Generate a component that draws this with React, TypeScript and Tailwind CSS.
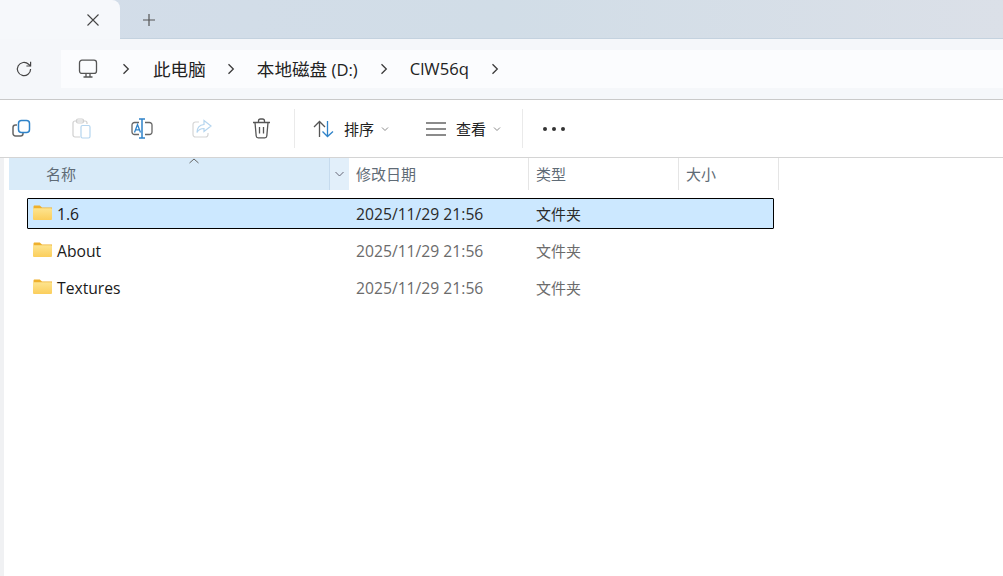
import React from "react";

const fontStack = "font-['Open_Sans','Noto_Sans_CJK_SC',sans-serif]";

const Chevron = ({ className = "" }: { className?: string }) => (
  <svg width="8" height="12" viewBox="0 0 8 12" fill="none" stroke="#3a3a3a" strokeWidth="1.3" className={className}>
    <path d="M1.5 1.2 6.3 6l-4.8 4.8" />
  </svg>
);

const SmallDown = () => (
  <svg width="8" height="6" viewBox="0 0 8 6" fill="none" stroke="#8a8a8a" strokeWidth="1">
    <path d="M1 1.5 4 4.5 7 1.5" />
  </svg>
);

const Folder = () => (
  <svg width="19" height="15" viewBox="0 0 19 15" className="shrink-0">
    <defs>
      <linearGradient id="folderBody" x1="0" y1="0" x2="0" y2="1">
        <stop offset="0" stopColor="#fde48f" />
        <stop offset="1" stopColor="#fbce5c" />
      </linearGradient>
    </defs>
    <path d="M0.500 1.700C0.500 1 1 0.500 1.700 0.500h4.600c.4 0 .7.1 1 .4L9 2.500h10V5H0.500z" fill="#efb02c" />
    <rect x="0" y="3.200" width="19" height="11.800" rx="1" fill="url(#folderBody)" />
  </svg>
);

const Row = ({ name, selected }: { name: string; selected?: boolean }) => (
  <div
    className={`ml-[27px] flex h-[31px] w-[747px] items-center rounded-[1px] border pt-[1px] text-[15.7px] ${
      selected ? "border-black bg-[#cce8ff]" : "border-transparent"
    }`}
  >
    <div className="flex w-[328px] items-center gap-[5px] pl-[5px] text-[#1a1a1a]">
      <div className="-mt-[3px]">
        <Folder />
      </div>
      <span className="pt-[1px]">{name}</span>
    </div>
    <div className={`w-[180px] pt-[1px] ${selected ? "text-[#2a2a2a]" : "text-[#6b6b6b]"}`}>2025/11/29 21:56</div>
    <div className={`text-[15px] ${selected ? "text-[#2a2a2a]" : "text-[#6b6b6b]"}`}>文件夹</div>
  </div>
);

const HeaderCell = ({ label, className }: { label: string; className: string }) => (
  <div className={`flex h-full items-center border-r border-[#e5e5e5] pl-[7px] text-[15px] text-[#5f6b76] ${className}`}>
    {label}
  </div>
);

export default function App() {
  return (
    <div className={`flex h-[576px] w-[1003px] flex-col overflow-hidden bg-white ${fontStack}`}>
      {/* Tab strip */}
      <div className="flex h-[39px] shrink-0 border-b border-[#c4d2df] bg-gradient-to-r from-[#d3dde9] via-[#d1dde7] to-[#dbe0e8]">
        <div className="-mb-px flex w-[120px] items-center justify-end rounded-tr-[8px] bg-[#f6f8fb] pr-[20px]">
          <svg width="14" height="14" viewBox="0 0 14 14" stroke="#444" strokeWidth="1.1">
            <path d="M1.5 1.5l11 11M12.5 1.5l-11 11" />
          </svg>
        </div>
        <div className="ml-[22px] flex items-center pt-[1px]">
          <svg width="14" height="14" viewBox="0 0 14 14" stroke="#555" strokeWidth="1.2">
            <path d="M7 1v12M1 7h12" />
          </svg>
        </div>
      </div>

      {/* Address bar */}
      <div className="flex h-[61px] shrink-0 items-center border-b border-[#c9c9c9] bg-[#f5f7fa]">
        <div className="flex w-[61px] justify-center pr-[14px]">
          <svg width="18" height="18" viewBox="0 0 18 18" fill="none" stroke="#444" strokeWidth="1.2">
            <path d="M15.600 9a6.600 6.600 0 1 1-2-4.700L15.500 6" />
            <path d="M15.600 1.800V6h-4.200" />
          </svg>
        </div>
        <div className="flex h-[38px] w-[942px] items-center bg-[#fbfcfe] text-[17.6px] text-[#222]">
          <svg width="20" height="20" viewBox="0 0 20 20" fill="none" stroke="#555" strokeWidth="1.3" className="ml-[17px]">
            <rect x="1.500" y="1.200" width="17" height="13.200" rx="2.500" />
            <path d="M8 14.500v3M12 14.500v3M5.500 18h9" />
          </svg>
          <Chevron className="ml-[24px]" />
          <span className="ml-[23px]">此电脑</span>
          <Chevron className="ml-[21px]" />
          <span className="ml-[22px]">
            本地磁盘<span className="text-[16.6px]"> (D:)</span>
          </span>
          <Chevron className="ml-[22px]" />
          <span className="ml-[22px] text-[16.6px]">ClW56q</span>
          <Chevron className="ml-[22px]" />
        </div>
      </div>

      {/* Command bar */}
      <div className="flex h-[58px] shrink-0 items-center border-b border-[#d4d4d4] bg-white pl-[12px]">
        <svg width="19" height="19" viewBox="0 0 19 19" fill="none" strokeWidth="1.5">
          <path d="M5 6H3.500A2.500 2.500 0 0 0 1 8.500v6A2.500 2.500 0 0 0 3.500 17h5A2.500 2.500 0 0 0 11 14.500V14" stroke="#666" />
          <rect x="6.500" y="1.500" width="11" height="12" rx="3" stroke="#2f83c9" />
        </svg>
        <svg width="19" height="21" viewBox="0 0 19 21" fill="none" strokeWidth="1.2" className="ml-[41px]">
          <path d="M8 19H3a2 2 0 0 1-2-2V5a2 2 0 0 1 2-2h10a2 2 0 0 1 2 2v1" stroke="#d0d0d0" />
          <rect x="4.500" y="1" width="7" height="4" rx="1.500" stroke="#d0d0d0" />
          <rect x="9" y="7.500" width="9" height="12.500" rx="1.500" stroke="#b5d5ef" />
        </svg>
        <svg width="22" height="21" viewBox="0 0 22 21" fill="none" className="ml-[40px]">
          <path d="M8 4.500H3.500A2.500 2.500 0 0 0 1 7v7a2.500 2.500 0 0 0 2.500 2.500H8M14 4.500h4.500A2.500 2.500 0 0 1 21 7v7a2.500 2.500 0 0 1-2.500 2.500H14" stroke="#666" strokeWidth="1.300" />
          <path d="M8 1h6M8 20h6M11 1v19" stroke="#2f83c9" strokeWidth="1.500" />
          <path d="M3.500 14.500 6.500 6.500l3 8M4.600 11.800h3.800" stroke="#2f83c9" strokeWidth="1.300" />
        </svg>
        <svg width="20" height="19" viewBox="0 0 20 19" fill="none" strokeWidth="1.200" className="ml-[39px]">
          <path d="M7 3H3.500A2.500 2.500 0 0 0 1 5.500v10A2.500 2.500 0 0 0 3.500 18h10a2.500 2.500 0 0 0 2.500-2.500V14" stroke="#d6d6d6" />
          <path d="M12 1.500 19 7l-7 5.500V9.500c-3.500 0-5.500 1-7 4 0-5 2.500-7.500 7-8z" stroke="#b5d5ef" />
        </svg>
        <svg width="19" height="21" viewBox="0 0 19 21" fill="none" stroke="#555" strokeWidth="1.300" className="ml-[40px]">
          <path d="M1 4.500h17M6.500 4.500V3a2 2 0 0 1 2-2h2a2 2 0 0 1 2 2v1.500" />
          <path d="M3 4.500 4.200 18a2 2 0 0 0 2 1.800h6.600a2 2 0 0 0 2-1.800L16 4.500" />
          <path d="M7.500 9v6.500M11.500 9v6.500" />
        </svg>
        <div className="ml-[23px] h-[39px] w-px bg-[#eaeaea]" />
        <svg width="22" height="18" viewBox="0 0 22 18" fill="none" strokeWidth="1.300" className="ml-[18px]">
          <path d="M6.500 17V1.500M1 7l5.500-5.500L12 7" stroke="#555" />
          <path d="M14.500 1v15.500M9.500 11.500l5 5 5.500-5" stroke="#2f83c9" />
        </svg>
        <span className="ml-[9px] mt-[2px] text-[15px] text-[#222]">排序</span>
        <div className="ml-[7px]"><SmallDown /></div>
        <svg width="20" height="14" viewBox="0 0 20 14" stroke="#666" strokeWidth="1.300" className="ml-[37px]">
          <path d="M0 1h20M0 7h20M0 13h20" />
        </svg>
        <span className="ml-[10px] mt-[2px] text-[15px] text-[#222]">查看</span>
        <div className="ml-[7px]"><SmallDown /></div>
        <div className="ml-[21px] h-[39px] w-px bg-[#eaeaea]" />
        <div className="ml-[20px] flex gap-[5px]">
          <span className="size-[4px] rounded-full bg-[#333]" />
          <span className="size-[4px] rounded-full bg-[#333]" />
          <span className="size-[4px] rounded-full bg-[#333]" />
        </div>
      </div>

      {/* File list */}
      <div className="flex min-h-0 flex-1">
        <div className="w-[4px] shrink-0 bg-[#f0f1f3]" />
        <div className="min-w-0 flex-1">
          <div className="relative ml-[5px] flex h-[32px] items-stretch">
            <svg width="10" height="6" viewBox="0 0 10 6" fill="none" stroke="#666" className="absolute top-0 left-[180px]">
              <path d="M0.500 5 5 1l4.500 4" />
            </svg>
            <div className="flex w-[321px] items-center border-r border-[#c6dbee] bg-[#d9ebf9] pl-[37px] text-[15px] text-[#5f6b76]">
              名称
            </div>
            <div className="flex w-[19px] items-center justify-center bg-[#e2effa]">
              <svg width="9" height="6" viewBox="0 0 9 6" fill="none" stroke="#667">
                <path d="M0.500 1 4.500 5l4-4" />
              </svg>
            </div>
            <HeaderCell label="修改日期" className="w-[180px]" />
            <HeaderCell label="类型" className="w-[150px]" />
            <HeaderCell label="大小" className="w-[100px]" />
          </div>
          <div className="-ml-[4px] mt-[8px] flex flex-col gap-[6px]">
            <Row name="1.6" selected />
            <Row name="About" />
            <Row name="Textures" />
          </div>
        </div>
      </div>
    </div>
  );
}
